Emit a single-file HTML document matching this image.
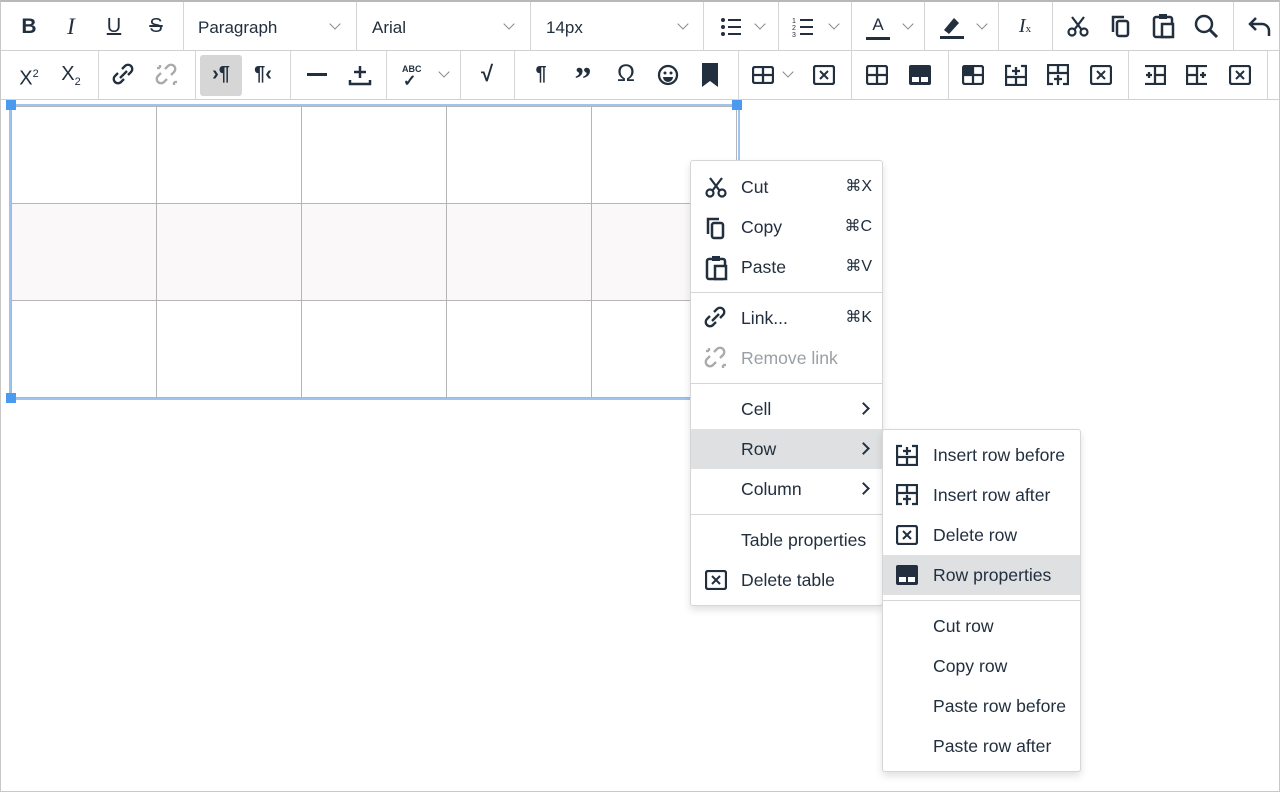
<!DOCTYPE html>
<html><head><meta charset="utf-8"><style>
*{box-sizing:border-box;margin:0;padding:0}
body{width:1280px;height:792px;overflow:hidden;background:#fff;font-family:"Liberation Sans",Arial,sans-serif;color:#222f3e;position:relative}
.frame{position:absolute;left:0;top:0;width:1280px;height:792px;border:1px solid #c8c8c8;border-top:2px solid #b8b8b8}
.row{position:absolute;left:1px;width:1278px;height:49px;border-bottom:1px solid #d0d0d0}
.sep{position:absolute;width:1px;background:#d5d5d5}
.ic{position:absolute;font-size:20px;font-weight:bold;line-height:24px;text-align:center;width:34px;color:#222f3e}
.chev{position:absolute;width:8px;height:8px;border-right:1.5px solid #888;border-bottom:1.5px solid #888;transform:rotate(45deg)}
.sel{position:absolute;font-size:17px;color:#222f3e}
svg{position:absolute}
table{position:absolute;left:11px;top:106px;border-collapse:collapse}
td{width:145px;height:97px;border:1px solid #b5b5b5}
.menu{position:absolute;background:#fff;border:1px solid #d6d6d6;border-radius:3px;box-shadow:0 4px 8px rgba(0,0,0,.12)}
.mi{position:absolute;left:0;right:0;height:40px;font-size:17.6px;line-height:40px}
.mi .t{position:absolute;left:50px}
.mi .k{position:absolute;right:10px;font-size:16px}
.hr{position:absolute;left:0;right:0;height:1px;background:#d6d6d6}
.hl{background:#dee0e2}
.arr{position:absolute;right:14px;top:15px;width:9px;height:9px;border-right:2px solid #222f3e;border-top:2px solid #222f3e;transform:rotate(45deg)}
.h{position:absolute;width:10px;height:10px;background:#4a9af0}
</style></head><body>
<div class="frame"></div>
<div class="row" style="top:2px"></div>
<div class="row" style="top:51px"></div>
<div class="sep" style="left:183px;top:2px;height:49px"></div>
<div class="sep" style="left:356px;top:2px;height:49px"></div>
<div class="sep" style="left:530px;top:2px;height:49px"></div>
<div class="sep" style="left:703px;top:2px;height:49px"></div>
<div class="sep" style="left:778px;top:2px;height:49px"></div>
<div class="sep" style="left:851px;top:2px;height:49px"></div>
<div class="sep" style="left:924px;top:2px;height:49px"></div>
<div class="sep" style="left:998px;top:2px;height:49px"></div>
<div class="sep" style="left:1052px;top:2px;height:49px"></div>
<div class="sep" style="left:1233px;top:2px;height:49px"></div>
<div class="sep" style="left:98px;top:51px;height:49px"></div>
<div class="sep" style="left:195px;top:51px;height:49px"></div>
<div class="sep" style="left:290px;top:51px;height:49px"></div>
<div class="sep" style="left:386px;top:51px;height:49px"></div>
<div class="sep" style="left:460px;top:51px;height:49px"></div>
<div class="sep" style="left:514px;top:51px;height:49px"></div>
<div class="sep" style="left:738px;top:51px;height:49px"></div>
<div class="sep" style="left:851px;top:51px;height:49px"></div>
<div class="sep" style="left:948px;top:51px;height:49px"></div>
<div class="sep" style="left:1128px;top:51px;height:49px"></div>
<div class="sep" style="left:1267px;top:51px;height:49px"></div>

<div class="ic" style="left:12px;top:15px;font-size:21px">B</div>
<div class="ic" style="left:54px;top:15px;font-family:'Liberation Serif';font-style:italic;font-weight:normal;font-size:23px">I</div>
<div class="ic" style="left:97px;top:14px;text-decoration:underline;font-weight:normal">U</div>
<div class="ic" style="left:139px;top:14px;text-decoration:line-through;font-weight:normal">S</div>
<div class="sel" style="left:198px;top:18px">Paragraph</div><div class="chev" style="left:331px;top:20px"></div>
<div class="sel" style="left:372px;top:18px">Arial</div><div class="chev" style="left:505px;top:20px"></div>
<div class="sel" style="left:546px;top:18px">14px</div><div class="chev" style="left:679px;top:20px"></div>
<svg style="left:720px;top:17px" width="22" height="20"><g fill="#222f3e"><circle cx="3" cy="3" r="2"/><circle cx="3" cy="10" r="2"/><circle cx="3" cy="17" r="2"/><rect x="8" y="2" width="13" height="2"/><rect x="8" y="9" width="13" height="2"/><rect x="8" y="16" width="13" height="2"/></g></svg>
<div class="chev" style="left:756px;top:20px"></div>
<svg style="left:792px;top:16px" width="22" height="22"><g fill="#222f3e"><text x="0" y="7" font-size="7">1</text><text x="0" y="14" font-size="7">2</text><text x="0" y="21" font-size="7">3</text><rect x="8" y="3" width="13" height="2"/><rect x="8" y="10" width="13" height="2"/><rect x="8" y="17" width="13" height="2"/></g></svg>
<div class="chev" style="left:830px;top:20px"></div>
<div class="ic" style="left:861px;top:13px;font-size:17px;font-weight:normal">A</div><div style="position:absolute;left:866px;top:37px;width:24px;height:3px;background:#222f3e"></div>
<div class="chev" style="left:904px;top:20px"></div>
<svg style="left:940px;top:14px" width="24" height="26"><path d="M4 16 L14 4 L19 9 L9 20 Z" fill="#222f3e"/><rect x="0" y="22" width="24" height="3" fill="#222f3e"/></svg>
<div class="chev" style="left:978px;top:20px"></div>
<div class="ic" style="left:1008px;top:14px;font-family:'Liberation Serif';font-style:italic;font-weight:normal">I<span style="font-size:11px;font-style:normal">x</span></div>
<svg style="left:1067px;top:15px" width="22" height="22"><g fill="none" stroke="#222f3e" stroke-width="2.2"><circle cx="5" cy="17" r="3.5"/><circle cx="17" cy="17" r="3.5"/><path d="M7.5 14.5 L17 2 M14.5 14.5 L5 2"/></g></svg>
<svg style="left:1110px;top:14px" width="22" height="24"><path d="M3 18V3h11" fill="none" stroke="#222f3e" stroke-width="2.5"/><rect x="7" y="7" width="11" height="15" rx="2" fill="none" stroke="#222f3e" stroke-width="2.5"/></svg>
<svg style="left:1152px;top:13px" width="24" height="26"><rect x="2" y="4" width="18" height="20" rx="2" fill="none" stroke="#222f3e" stroke-width="2.5"/><rect x="7" y="1" width="8" height="5" fill="#222f3e"/><rect x="10" y="11" width="11" height="13" fill="#fff" stroke="#222f3e" stroke-width="2.5"/></svg>
<svg style="left:1194px;top:14px" width="26" height="26"><circle cx="10" cy="10" r="8" fill="none" stroke="#222f3e" stroke-width="2.5"/><path d="M16 16 L23 23" stroke="#222f3e" stroke-width="3"/></svg>
<svg style="left:1248px;top:14px" width="24" height="24"><path d="M8 4 L2 10 L8 16 M2 10 H14 a7 7 0 0 1 7 7 V22" fill="none" stroke="#222f3e" stroke-width="2.5"/></svg>

<div class="ic" style="left:12px;top:62px;font-weight:normal">X<sup style="font-size:11px">2</sup></div>
<div class="ic" style="left:54px;top:62px;font-weight:normal">X<sub style="font-size:11px">2</sub></div>
<svg style="left:112px;top:63px" width="24" height="24"><g fill="none" stroke="#222f3e" stroke-width="2.3"><path d="M10 6 L13 3 a4 4 0 0 1 6 6 L16 12"/><path d="M12 16 L9 19 a4 4 0 0 1 -6 -6 L6 10"/><path d="M8 15 L15 8"/></g></svg>
<svg style="left:155px;top:63px" width="24" height="24"><g fill="none" stroke="#aaa" stroke-width="2.3"><path d="M10 6 L13 3 a4 4 0 0 1 6 6 L16 12"/><path d="M12 16 L9 19 a4 4 0 0 1 -6 -6 L6 10"/><path d="M2 5h3M5 2v3M19 22v-3M22 19h-3"/></g></svg>
<div style="position:absolute;left:200px;top:55px;width:42px;height:41px;background:#d6d6d6;border-radius:3px"></div>
<div class="ic" style="left:204px;top:62px">›¶</div>
<div class="ic" style="left:246px;top:62px">¶‹</div>
<div style="position:absolute;left:307px;top:73px;width:20px;height:3px;background:#222f3e"></div>
<svg style="left:348px;top:63px" width="24" height="24"><path d="M12 3v12M6 9h12M2 17v4h20v-4" fill="none" stroke="#222f3e" stroke-width="2.5"/></svg>
<div style="position:absolute;left:402px;top:64px;font-size:9px;font-weight:bold">ABC</div><div style="position:absolute;left:403px;top:71px;font-size:16px;font-weight:bold">✓</div>
<div class="chev" style="left:440px;top:68px"></div>
<div class="ic" style="left:470px;top:62px;font-size:22px">√</div>
<div class="ic" style="left:524px;top:62px">¶</div>
<div class="ic" style="left:566px;top:60px;font-size:34px;line-height:40px;font-family:'Liberation Serif'">”</div>
<div class="ic" style="left:609px;top:62px;font-weight:normal;font-size:24px">Ω</div>
<svg style="left:657px;top:64px" width="22" height="22"><circle cx="11" cy="11" r="9" fill="none" stroke="#222f3e" stroke-width="2.3"/><circle cx="8" cy="9" r="1.5" fill="#222f3e"/><circle cx="14" cy="9" r="1.5" fill="#222f3e"/><path d="M6 13 a5 5 0 0 0 10 0Z" fill="#222f3e"/></svg>
<svg style="left:702px;top:63px" width="16" height="24"><path d="M0 0h16v24l-8-6-8 6Z" fill="#222f3e"/></svg>

<svg style="left:752px;top:66px" width="22" height="18"><rect x="1" y="1" width="20" height="16" rx="2" fill="none" stroke="#222f3e" stroke-width="2.3"/><path d="M1 9h20M11 1v16" stroke="#222f3e" stroke-width="2.3"/></svg>
<div class="chev" style="left:784px;top:68px"></div>
<svg style="left:813px;top:65px" width="22" height="20"><rect x="1" y="1" width="20" height="18" rx="2" fill="none" stroke="#222f3e" stroke-width="2.3"/><path d="M7 6l8 8M15 6l-8 8" stroke="#222f3e" stroke-width="2"/></svg>
<svg style="left:866px;top:65px" width="22" height="20"><rect x="1" y="1" width="20" height="18" rx="2" fill="none" stroke="#222f3e" stroke-width="2.3"/><path d="M1 10h20M11 1v18" stroke="#222f3e" stroke-width="2.3"/></svg>
<svg style="left:909px;top:65px" width="22" height="20"><rect x="0" y="0" width="22" height="20" rx="2" fill="#222f3e"/><rect x="3" y="12" width="7" height="5" fill="#fff"/><rect x="12" y="12" width="7" height="5" fill="#fff"/></svg>
<svg style="left:962px;top:65px" width="22" height="20"><rect x="1" y="1" width="20" height="18" rx="2" fill="none" stroke="#222f3e" stroke-width="2.3"/><rect x="1" y="1" width="10" height="9" fill="#222f3e"/><path d="M1 10h20M11 1v18" stroke="#222f3e" stroke-width="2.3"/></svg>
<svg style="left:1005px;top:64px" width="22" height="22"><path d="M6 2H1v19h20V2h-5M1 13h20M11 13v8M11 3v8M7 7h8" fill="none" stroke="#222f3e" stroke-width="2.3"/></svg>
<svg style="left:1047px;top:64px" width="22" height="22"><path d="M6 20H1V1h20v19h-5M1 9h20M11 1v8M11 11v10M7 15h8" fill="none" stroke="#222f3e" stroke-width="2.3"/></svg>
<svg style="left:1090px;top:65px" width="22" height="20"><path d="M3 1h16a2 2 0 0 1 2 2v14a2 2 0 0 1-2 2H3a2 2 0 0 1-2-2V3a2 2 0 0 1 2-2Z" fill="none" stroke="#222f3e" stroke-width="2.3"/><path d="M7 6l8 8M15 6l-8 8" stroke="#222f3e" stroke-width="2"/></svg>
<svg style="left:1144px;top:65px" width="22" height="20"><path d="M1 1h20v18H1M11 1v18M11 10h10M2 10h6M5 7v6" fill="none" stroke="#222f3e" stroke-width="2.3"/></svg>
<svg style="left:1186px;top:65px" width="22" height="20"><path d="M21 1H1v18h20M11 1v18M1 10h10M14 10h6M17 7v6" fill="none" stroke="#222f3e" stroke-width="2.3"/></svg>
<svg style="left:1229px;top:65px" width="22" height="20"><rect x="1" y="1" width="20" height="18" rx="2" fill="none" stroke="#222f3e" stroke-width="2.3"/><path d="M7 6l8 8M15 6l-8 8" stroke="#222f3e" stroke-width="2"/></svg>

<div style="position:absolute;left:9px;top:104px;width:731px;height:296px;border:2px solid #9fc3ee"></div>
<table>
<tr><td></td><td></td><td></td><td></td><td></td></tr>
<tr style="background:#faf8f9"><td></td><td></td><td></td><td></td><td></td></tr>
<tr><td></td><td></td><td></td><td></td><td></td></tr>
</table>
<div class="h" style="left:6px;top:100px"></div>
<div class="h" style="left:732px;top:100px"></div>
<div class="h" style="left:6px;top:393px"></div>

<div class="menu" style="left:690px;top:160px;width:193px;height:446px">
 <div class="mi" style="top:6px"><svg style="left:14px;top:9px" width="22" height="22"><g fill="none" stroke="#222f3e" stroke-width="2.2"><circle cx="5" cy="17" r="3.5"/><circle cx="17" cy="17" r="3.5"/><path d="M7.5 14.5 L17 2 M14.5 14.5 L5 2"/></g></svg><span class="t">Cut</span><span class="k">⌘X</span></div>
 <div class="mi" style="top:46px"><svg style="left:14px;top:9px" width="22" height="24"><path d="M3 18V3h11" fill="none" stroke="#222f3e" stroke-width="2.5"/><rect x="7" y="7" width="11" height="15" rx="2" fill="none" stroke="#222f3e" stroke-width="2.5"/></svg><span class="t">Copy</span><span class="k">⌘C</span></div>
 <div class="mi" style="top:86px"><svg style="left:14px;top:8px" width="24" height="26"><rect x="2" y="4" width="18" height="20" rx="2" fill="none" stroke="#222f3e" stroke-width="2.5"/><rect x="7" y="1" width="8" height="5" fill="#222f3e"/><rect x="10" y="11" width="11" height="13" fill="#fff" stroke="#222f3e" stroke-width="2.5"/></svg><span class="t">Paste</span><span class="k">⌘V</span></div>
 <div class="hr" style="top:131px"></div>
 <div class="mi" style="top:137px"><svg style="left:13px;top:8px" width="24" height="24"><g fill="none" stroke="#222f3e" stroke-width="2.3"><path d="M10 6 L13 3 a4 4 0 0 1 6 6 L16 12"/><path d="M12 16 L9 19 a4 4 0 0 1 -6 -6 L6 10"/><path d="M8 15 L15 8"/></g></svg><span class="t">Link...</span><span class="k">⌘K</span></div>
 <div class="mi" style="top:177px;color:#9a9fa5"><svg style="left:13px;top:8px" width="24" height="24"><g fill="none" stroke="#aaa" stroke-width="2.3"><path d="M10 6 L13 3 a4 4 0 0 1 6 6 L16 12"/><path d="M12 16 L9 19 a4 4 0 0 1 -6 -6 L6 10"/><path d="M2 5h3M5 2v3M19 22v-3M22 19h-3"/></g></svg><span class="t">Remove link</span></div>
 <div class="hr" style="top:222px"></div>
 <div class="mi" style="top:228px"><span class="t">Cell</span><span class="arr"></span></div>
 <div class="mi hl" style="top:268px"><span class="t">Row</span><span class="arr"></span></div>
 <div class="mi" style="top:308px"><span class="t">Column</span><span class="arr"></span></div>
 <div class="hr" style="top:353px"></div>
 <div class="mi" style="top:359px"><span class="t">Table properties</span></div>
 <div class="mi" style="top:399px"><svg style="left:14px;top:10px" width="22" height="20"><rect x="1" y="1" width="20" height="18" rx="2" fill="none" stroke="#222f3e" stroke-width="2.3"/><path d="M7 6l8 8M15 6l-8 8" stroke="#222f3e" stroke-width="2"/></svg><span class="t">Delete table</span></div>
</div>

<div class="menu" style="left:882px;top:429px;width:199px;height:343px">
 <div class="mi" style="top:5px"><svg style="left:13px;top:9px" width="22" height="22"><path d="M6 2H1v19h20V2h-5M1 13h20M11 13v8M11 3v8M7 7h8" fill="none" stroke="#222f3e" stroke-width="2.3"/></svg><span class="t">Insert row before</span></div>
 <div class="mi" style="top:45px"><svg style="left:13px;top:9px" width="22" height="22"><path d="M6 20H1V1h20v19h-5M1 9h20M11 1v8M11 11v10M7 15h8" fill="none" stroke="#222f3e" stroke-width="2.3"/></svg><span class="t">Insert row after</span></div>
 <div class="mi" style="top:85px"><svg style="left:13px;top:10px" width="22" height="20"><path d="M3 1h16a2 2 0 0 1 2 2v14a2 2 0 0 1-2 2H3a2 2 0 0 1-2-2V3a2 2 0 0 1 2-2Z" fill="none" stroke="#222f3e" stroke-width="2.3"/><path d="M7 6l8 8M15 6l-8 8" stroke="#222f3e" stroke-width="2"/></svg><span class="t">Delete row</span></div>
 <div class="mi hl" style="top:125px"><svg style="left:13px;top:10px" width="22" height="20"><rect x="0" y="0" width="22" height="20" rx="2" fill="#222f3e"/><rect x="3" y="12" width="7" height="5" fill="#fff"/><rect x="12" y="12" width="7" height="5" fill="#fff"/></svg><span class="t">Row properties</span></div>
 <div class="hr" style="top:170px"></div>
 <div class="mi" style="top:176px"><span class="t">Cut row</span></div>
 <div class="mi" style="top:216px"><span class="t">Copy row</span></div>
 <div class="mi" style="top:256px"><span class="t">Paste row before</span></div>
 <div class="mi" style="top:296px"><span class="t">Paste row after</span></div>
</div>
</body></html>
